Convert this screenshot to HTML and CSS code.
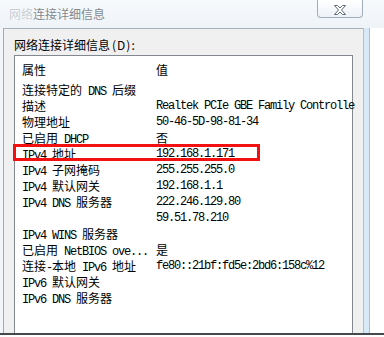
FILE: index.html
```html
<!DOCTYPE html>
<html lang="zh-CN">
<head>
    <meta charset="UTF-8">
    <title>网络连接详细信息</title>
    <link rel="stylesheet" href="styles.css">
</head>
<body>
<div class="window">
    <div class="titlebar">
        <span class="title"><span class="faint">网络</span>连接详细信息</span>
        <div class="close">
            <svg width="12" height="10" viewBox="0 0 12 10">
                <polygon points="0.5,0.5 3.5,0.5 6,3 8.5,0.5 11.5,0.5 7.5,5 11.5,9.5 8.5,9.5 6,7 3.5,9.5 0.5,9.5 4.5,5"
                         fill="#ffffff" stroke="#5f6b78" stroke-width="1"/>
            </svg>
        </div>
    </div>

    <div class="main">
        <div class="edge"></div>
        <div class="panel">
            <div class="caption">网络连接详细信息<span class="key">(D):</span></div>
            <div class="list">
                <div class="head">
                    <div class="c1">属性</div>
                    <div class="c2">值</div>
                </div>
                <div class="row">
                    <div class="c1"><span class="zh">连接特定的</span> DNS <span class="zh">后缀</span></div>
                    <div class="c2"></div>
                </div>
                <div class="row">
                    <div class="c1"><span class="zh">描述</span></div>
                    <div class="c2">Realtek PCIe GBE Family Controlle</div>
                </div>
                <div class="row">
                    <div class="c1"><span class="zh">物理地址</span></div>
                    <div class="c2">50-46-5D-98-81-34</div>
                </div>
                <div class="row">
                    <div class="c1"><span class="zh">已启用</span> DHCP</div>
                    <div class="c2"><span class="zh">否</span></div>
                </div>
                <div class="row">
                    <div class="c1">IPv4 <span class="zh">地址</span></div>
                    <div class="c2">192.168.1.171</div>
                </div>
                <div class="row">
                    <div class="c1">IPv4 <span class="zh">子网掩码</span></div>
                    <div class="c2">255.255.255.0</div>
                </div>
                <div class="row">
                    <div class="c1">IPv4 <span class="zh">默认网关</span></div>
                    <div class="c2">192.168.1.1</div>
                </div>
                <div class="row">
                    <div class="c1">IPv4 DNS <span class="zh">服务器</span></div>
                    <div class="c2">222.246.129.80</div>
                </div>
                <div class="row">
                    <div class="c1"></div>
                    <div class="c2">59.51.78.210</div>
                </div>
                <div class="row">
                    <div class="c1">IPv4 WINS <span class="zh">服务器</span></div>
                    <div class="c2"></div>
                </div>
                <div class="row">
                    <div class="c1"><span class="zh">已启用</span> NetBIOS ove...</div>
                    <div class="c2"><span class="zh">是</span></div>
                </div>
                <div class="row">
                    <div class="c1"><span class="zh">连接</span>-<span class="zh">本地</span> IPv6 <span class="zh">地址</span></div>
                    <div class="c2">fe80::21bf:fd5e:2bd6:158c%12</div>
                </div>
                <div class="row">
                    <div class="c1">IPv6 <span class="zh">默认网关</span></div>
                    <div class="c2"></div>
                </div>
                <div class="row">
                    <div class="c1">IPv6 DNS <span class="zh">服务器</span></div>
                    <div class="c2"></div>
                </div>

                <!-- red box round the IPv4 row -->
                <div class="mark"></div>
            </div>
        </div>
        <div class="glass"></div>
    </div>

    <div class="bottom"></div>
</div>
</body>
</html>
```

FILE: styles.css
```css
* {
    box-sizing: border-box;
}

body {
    margin: 0;
    background: #ffffff;
    font-family: "Noto Sans CJK SC", sans-serif;
}

.window {
    width: 384px;
    height: 337px;
    display: flex;
    flex-direction: column;
    background: #ffffff;
}

.titlebar {
    height: 28px;
    display: flex;
    align-items: flex-start;
    background: linear-gradient(#f7fafd, #eef3f8);
}

.title {
    margin: 6px 0 0 9px;
    font-size: 12px;
    line-height: 16px;
    color: #808890;
    text-shadow: 0 0 2px #ffffff;
}

.title .faint {
    color: #c9ced4;
}

.close {
    margin-left: auto;
    margin-right: 21px;
    width: 46px;
    height: 18px;
    display: flex;
    align-items: center;
    justify-content: center;
    padding-top: 2px;
    border: 1px solid #a3adb8;
    border-top: none;
    border-radius: 0 0 4px 4px;
    background: linear-gradient(#ffffff, #edf2f7);
}

.main {
    height: 305px;
    display: flex;
}

.edge {
    width: 3px;
    background: #f2f6fa;
}

.panel {
    width: 360px;
    padding: 8px 0 0 0;
    overflow: hidden;
    background: #f0f0f0;
    border-top: 1px solid #a9b2bb;
    border-left: 1px solid #a3a8ae;
}

.caption {
    margin-left: 10px;
    font-size: 12px;
    line-height: 16px;
    color: #000000;
}

.caption .key {
    margin-left: 2px;
    letter-spacing: 1px;
}

.list {
    position: relative;
    width: 339px;
    height: 300px;
    margin: 2px 0 0 10px;
    background: #ffffff;
    border: 1px solid #828790;
    font-family: "Liberation Mono", "Noto Sans CJK SC", monospace;
    font-size: 12px;
    letter-spacing: -1.2px;
    color: #000000;
}

.head, .row {
    display: flex;
    line-height: 16px;
}

.head {
    height: 26px;
    padding-top: 6px;
    font-family: "Noto Sans CJK SC", sans-serif;
    font-size: 12px;
    letter-spacing: 0;
}

.row {
    height: 16px;
}

.c1 {
    width: 141px;
    padding-left: 7px;
    white-space: nowrap;
}

.c2 {
    width: 196px;
    white-space: nowrap;
}

.zh {
    font-family: "Noto Sans CJK SC", sans-serif;
    font-size: 12px;
    letter-spacing: 0;
}

.mark {
    position: absolute;
    left: -2px;
    top: 88px;
    width: 247px;
    height: 17px;
    border: 3px solid #f21010;
}

.glass {
    width: 7px;
    background: #d7e8f7;
    border-left: 1px solid #b7bfc8;
    border-right: 1px solid #a9bfd4;
}

.bottom {
    height: 4px;
    border-top: 2px solid #45494d;
    background: #ffffff;
}
```
